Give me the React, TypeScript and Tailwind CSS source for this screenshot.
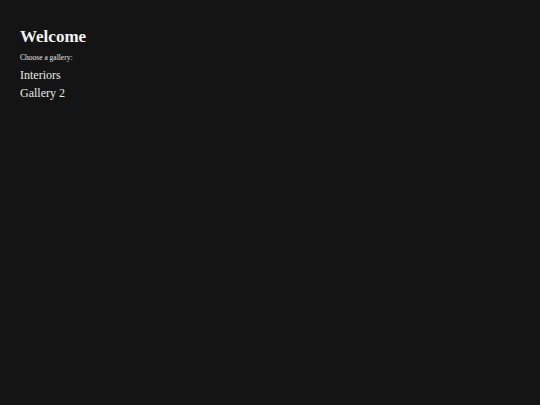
import React from 'react';

const galleries = ['Interiors', 'Gallery 2'];

export default function App() {
  return (
    <div className="min-h-screen bg-[#141414] text-[#e8e8e8] px-5 pt-[27px] font-['Liberation_Serif',Georgia,serif]">
      <h1 className="text-[17px] font-bold leading-[20px] text-[#f2f2f2]">Welcome</h1>
      <p className="mt-[6px] text-[7.5px] leading-[10px]">Choose a gallery:</p>
      <ul className="mt-[3px]">
        {galleries.map((g) => (
          <li key={g} className="text-[12px] leading-[18px]">
            {g}
          </li>
        ))}
      </ul>
    </div>
  );
}
